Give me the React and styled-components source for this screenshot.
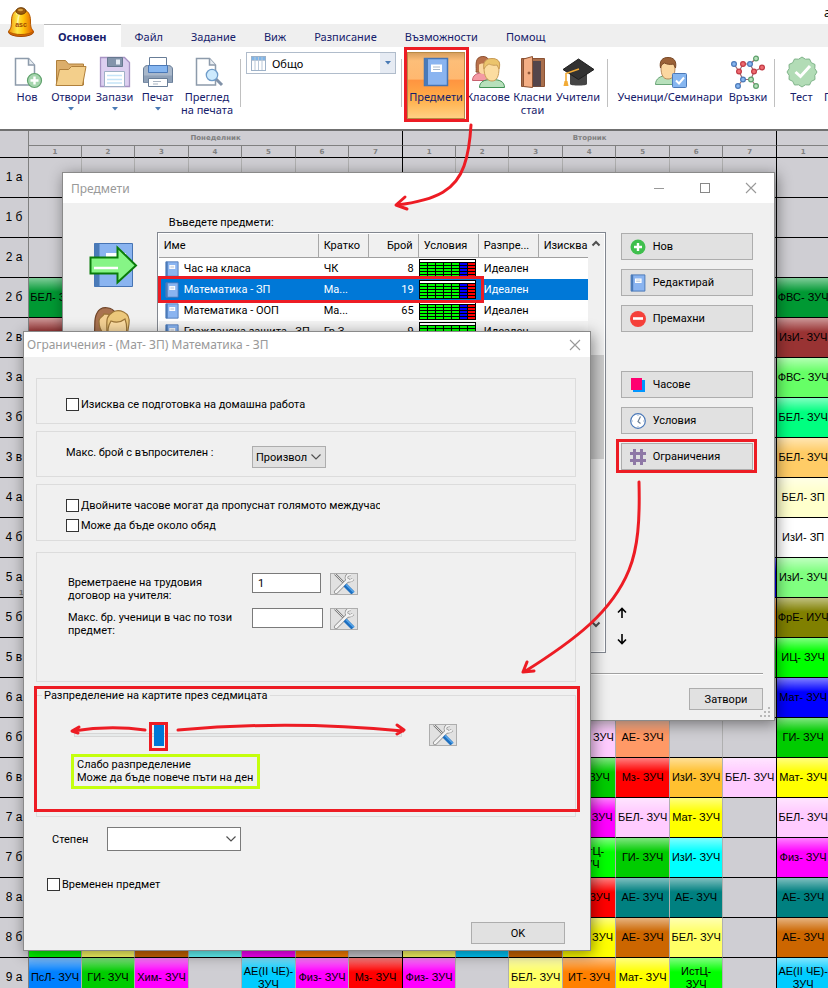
import { useState } from "react";
import styled, { createGlobalStyle } from "styled-components";

const RED = "#ed1c24";

const DAYS = ["Понеделник", "Вторник", "Сряда"];
const PERIODS = [1, 2, 3, 4, 5, 6, 7];
const COL_WIDTHS = [53, 53, 54, 53, 54, 53, 54];

const C = {
    green: "#009933",
    maroon: "#993333",
    light: "#66ff66",
    spring: "#00ff80",
    sand: "#ffcc66",
    cream: "#ffffcc",
    white: "#ffffff",
    mint: "#80ff80",
    olive: "#808000",
    lime: "#00ff00",
    blue: "#0000ff",
    grass: "#00cc00",
    yellow: "#ffff00",
    pink: "#ffccff",
    magenta: "#ff00ff",
    teal: "#008080",
    brown: "#cc6600",
    sky: "#00ccff",
    salmon: "#ff9966",
    red: "#ff0000",
    amber: "#ffc030",
    cyan: "#00ffff",
    lemon: "#ffff66",
    orange: "#ff8000",
    azure: "#0080ff",
};

// lessons: column index (0 = first period of the first day) -> [text, colour]
const ROWS = [
    { name: "1 а", lessons: {} },
    { name: "1 б", lessons: {} },
    { name: "2 а", lessons: {} },
    { name: "2 б", lessons: { 0: ["БЕЛ- ЗУЧ", C.green], 14: ["ФВС- ЗУЧ", C.green] } },
    { name: "2 в", lessons: { 0: ["", C.maroon], 14: ["ИзИ- ЗУЧ", C.maroon] } },
    { name: "3 а", lessons: { 14: ["ФВС- ЗУЧ", C.light] } },
    { name: "3 б", lessons: { 14: ["БЕЛ- ЗУЧ", C.spring] } },
    { name: "3 в", lessons: { 14: ["БЕЛ- ЗУЧ", C.sand] } },
    { name: "4 а", lessons: { 14: ["БЕЛ- ЗП", C.cream] } },
    { name: "4 б", lessons: { 14: ["ИзИ- ЗП", C.white] } },
    { name: "5 а", note: "13", lessons: { 13: ["", C.blue], 14: ["ИзИ- ЗУЧ", C.mint] } },
    { name: "5 б", lessons: { 13: ["", C.orange], 14: ["ФрЕ- ИУЧ", C.olive] } },
    { name: "5 в", lessons: { 13: ["", C.grass], 14: ["ИЦ- ЗУЧ", C.lime] } },
    { name: "6 а", lessons: { 14: ["Мат- ЗУЧ", C.blue] } },
    {
        name: "6 б",
        lessons: { 10: ["БЕЛ- ЗУЧ", C.pink], 11: ["АЕ- ЗУЧ", C.salmon], 14: ["ГИ- ЗУЧ", C.grass] },
    },
    {
        name: "6 в",
        lessons: {
            10: ["ГИ- ЗУЧ", C.grass],
            11: ["Мз- ЗУЧ", C.red],
            12: ["ИзИ- ЗУЧ", C.amber],
            13: ["БЕЛ- ЗУЧ", C.pink],
            14: ["Мат- ЗУЧ", C.yellow],
        },
    },
    {
        name: "7 а",
        lessons: {
            10: ["Физ- ЗУЧ", C.magenta],
            11: ["БЕЛ- ЗУЧ", C.pink],
            12: ["Мат- ЗУЧ", C.yellow],
            14: ["БЕЛ- ЗУЧ", C.pink],
        },
    },
    {
        name: "7 б",
        lessons: {
            10: ["ИстЦ- ЗУЧ", C.lime],
            11: ["ГИ- ЗУЧ", C.grass],
            12: ["ИзИ- ЗУЧ", C.cyan],
            14: ["Физ- ЗУЧ", C.magenta],
        },
    },
    {
        name: "8 а",
        lessons: {
            10: ["Мз- ЗУЧ", C.red],
            11: ["АЕ- ЗУЧ", C.teal],
            12: ["АЕ- ЗУЧ", C.teal],
            14: ["АЕ- ЗУЧ", C.teal],
        },
    },
    {
        name: "8 б",
        lessons: {
            0: ["", C.lime],
            1: ["", C.lemon],
            2: ["", C.brown],
            3: ["", "#66ffff"],
            4: ["", C.magenta],
            5: ["", C.orange],
            7: ["", C.lemon],
            8: ["", C.sky],
            9: ["", C.brown],
            10: ["Мат- ЗУЧ", C.yellow],
            11: ["АЕ- ЗУЧ", C.brown],
            12: ["БЕЛ- ЗУЧ", C.lemon],
            14: ["АЕ- ЗУЧ", C.brown],
        },
    },
    {
        name: "9 а",
        lessons: {
            0: ["ПсЛ- ЗУЧ", C.azure],
            1: ["ГИ- ЗУЧ", C.grass],
            2: ["Хим- ЗУЧ", C.magenta],
            4: ["АЕ(II ЧЕ)- ЗУЧ", C.sky],
            5: ["Физ- ЗУЧ", C.magenta],
            6: ["Мз- ЗУЧ", C.red],
            7: ["Физ- ЗУЧ", C.magenta],
            9: ["БЕЛ- ЗУЧ", C.lemon],
            10: ["ИТ- ЗУЧ", C.orange],
            11: ["Мат- ЗУЧ", C.yellow],
            12: ["ИстЦ- ЗУЧ", C.lime],
            14: ["АЕ(II ЧЕ)- ЗУЧ", C.sky],
        },
    },
];

const TABS = ["Основен", "Файл", "Задание", "Виж", "Разписание", "Възможности", "Помощ"];

const SUBJECTS = [
    { name: "Час на класа", short: "ЧК", count: 8 },
    { name: "Математика - ЗП", short: "Ма...", count: 19 },
    { name: "Математика - ООП", short: "Ма...", count: 65 },
    { name: "Гражданска защита - ЗП", short: "Гр.З", count: 9, plain: true },
];

export default function App() {
    return (
        <Page>
            <GlobalStyle />
            <Ribbon />
            <Timetable />
            <SubjectsWindow />
            <ConstraintsWindow />
            <Marks />
        </Page>
    );
}

function Ribbon() {
    return (
        <header>
            <TitleBar>
                <AppTitle>aSc Разписания</AppTitle>
            </TitleBar>
            <TabBar>
                {TABS.map((tab, i) => (
                    <Tab key={tab} $active={i === 0}>
                        {tab}
                    </Tab>
                ))}
            </TabBar>
            <LogoBox>
                <BellIcon />
            </LogoBox>
            <Toolbar>
                <ToolButton $w={44}>
                    <NewIcon />
                    Нов
                </ToolButton>
                <ToolButton $w={44}>
                    <FolderIcon />
                    Отвори
                    <Caret />
                </ToolButton>
                <ToolButton $w={43}>
                    <FloppyIcon />
                    Запази
                    <Caret />
                </ToolButton>
                <ToolButton $w={43}>
                    <PrinterIcon />
                    Печат
                    <Caret />
                </ToolButton>
                <ToolButton $w={56}>
                    <PreviewIcon />
                    Преглед на печата
                </ToolButton>
                <Separator />
                <ViewBox>
                    <GridIcon />
                    <ViewSelect aria-label="Изглед">
                        <option>Общо</option>
                    </ViewSelect>
                    <ViewArrow>
                        <Caret />
                    </ViewArrow>
                </ViewBox>
                <Separator />
                <ToolButton $w={58} $active>
                    <BookIcon size={30} />
                    Предмети
                </ToolButton>
                <ToolButton $w={46}>
                    <PeopleIcon size={34} />
                    Класове
                </ToolButton>
                <ToolButton $w={43}>
                    <DoorIcon />
                    Класни стаи
                </ToolButton>
                <ToolButton $w={48}>
                    <HatIcon />
                    Учители
                </ToolButton>
                <Separator />
                <ToolButton $w={114}>
                    <StudentIcon />
                    Ученици/Семинари
                </ToolButton>
                <ToolButton $w={42}>
                    <LinksIcon />
                    Връзки
                </ToolButton>
                <Separator />
                <ToolButton $w={43}>
                    <TestIcon />
                    Тест
                </ToolButton>
                <ToolButton $w={54}>
                    <TestIcon />
                    Проверка
                </ToolButton>
            </Toolbar>
        </header>
    );
}

function Timetable() {
    return (
        <TimetableBox>
            <Table>
                <colgroup>
                    <Col $w={29} />
                    {DAYS.map((day) => COL_WIDTHS.map((w, i) => <Col key={day + i} $w={w} />))}
                </colgroup>
                <thead>
                    <tr>
                        <Corner rowSpan={2} />
                        {DAYS.map((day) => (
                            <DayHead key={day} colSpan={7}>
                                {day}
                            </DayHead>
                        ))}
                    </tr>
                    <tr>
                        {DAYS.map((day) =>
                            PERIODS.map((p) => (
                                <PeriodHead key={day + p} $last={p === 7}>
                                    {p}
                                </PeriodHead>
                            ))
                        )}
                    </tr>
                </thead>
                <tbody>
                    {ROWS.map((row) => (
                        <tr key={row.name}>
                            <ClassHead>
                                {row.name}
                                {row.note && <Note>{row.note}</Note>}
                            </ClassHead>
                            {Array.from({ length: 21 }, (_, i) => {
                                const [text, color] = row.lessons[i] || [];
                                return (
                                    <Lesson key={i} $color={color} $last={i % 7 === 6}>
                                        {text}
                                    </Lesson>
                                );
                            })}
                        </tr>
                    ))}
                </tbody>
            </Table>
        </TimetableBox>
    );
}

function SubjectsWindow() {
    return (
        <SubjectsFrame>
            <WindowTitle $tall>
                <span>Предмети</span>
                <WindowButtons>
                    <IconButton aria-label="Минимизирай">
                        <svg width="12" height="12" stroke="#999">
                            <path d="M1 6.5h10" />
                        </svg>
                    </IconButton>
                    <IconButton aria-label="Увеличи">
                        <svg width="12" height="12" fill="none" stroke="#888">
                            <rect x="1.5" y="1.5" width="9" height="9" />
                        </svg>
                    </IconButton>
                    <IconButton aria-label="Затвори прозореца">
                        <CloseIcon />
                    </IconButton>
                </WindowButtons>
            </WindowTitle>
            <SubjectsBody>
                <SideIcons>
                    <BookArrowIcon />
                    <PeopleBigIcon />
                </SideIcons>
                <ListColumn>
                    <ListLabel>Въведете предмети:</ListLabel>
                    <ListBox>
                        <ListScroll>
                            <SubjectTable>
                                <colgroup>
                                    <Col $w={160} />
                                    <Col $w={50} />
                                    <Col $w={50} />
                                    <Col $w={60} />
                                    <Col $w={60} />
                                    <Col $w={49} />
                                </colgroup>
                                <thead>
                                    <tr>
                                        <th>Име</th>
                                        <th>Кратко</th>
                                        <Right as="th">Брой</Right>
                                        <th>Условия</th>
                                        <th>Разпре...</th>
                                        <th>Изисква</th>
                                    </tr>
                                </thead>
                                <tbody>
                                    {SUBJECTS.map((s, i) => (
                                        <SubjectRow key={s.name} $selected={i === 1} $grey={i === 3}>
                                            <td>
                                                <NameCell>
                                                    <BookIcon size={16} />
                                                    {s.name}
                                                </NameCell>
                                            </td>
                                            <td>{s.short}</td>
                                            <Right>{s.count}</Right>
                                            <GridCell>
                                                <ConditionGrid plain={s.plain} />
                                            </GridCell>
                                            <td>Идеален</td>
                                            <td />
                                        </SubjectRow>
                                    ))}
                                </tbody>
                            </SubjectTable>
                            <ScrollBar>
                                <Chevron up />
                                <ScrollThumb />
                                <Chevron />
                            </ScrollBar>
                        </ListScroll>
                    </ListBox>
                </ListColumn>
                <ActionColumn>
                    <ActionButton>
                        <AddIcon />
                        Нов
                    </ActionButton>
                    <ActionButton>
                        <BookIcon size={18} />
                        Редактирай
                    </ActionButton>
                    <ActionButton>
                        <RemoveIcon />
                        Премахни
                    </ActionButton>
                    <ActionGap />
                    <ActionButton>
                        <CardsIcon />
                        Часове
                    </ActionButton>
                    <ActionButton>
                        <ClockIcon />
                        Условия
                    </ActionButton>
                    <ActionButton>
                        <HashIcon />
                        Ограничения
                    </ActionButton>
                    <MoveButtons>
                        <IconButton aria-label="Нагоре">
                            <ArrowIcon />
                        </IconButton>
                        <IconButton aria-label="Надолу">
                            <ArrowIcon down />
                        </IconButton>
                    </MoveButtons>
                </ActionColumn>
            </SubjectsBody>
            <SubjectsFooter>
                <PlainButton $w={74}>Затвори</PlainButton>
            </SubjectsFooter>
            <Grip>
                <svg width="10" height="10" fill="#b8b8b8">
                    <path d="M8 0h2v2H8zM4 4h2v2H4zM8 4h2v2H8zM0 8h2v2H0zM4 8h2v2H4zM8 8h2v2H8z" />
                </svg>
            </Grip>
        </SubjectsFrame>
    );
}

function ConstraintsWindow() {
    const [spread, setSpread] = useState(1);

    return (
        <ConstraintsFrame>
            <WindowTitle>
                <span>Ограничения - (Мат- ЗП) Математика - ЗП</span>
                <IconButton aria-label="Затвори прозореца">
                    <CloseIcon />
                </IconButton>
            </WindowTitle>
            <ConstraintsBody>
                <Group $h={46}>
                    <CheckLabel>
                        <CheckBox />
                        Изисква се подготовка на домашна работа
                    </CheckLabel>
                </Group>
                <Group $h={46}>
                    <FormRow>
                        <FieldLabel htmlFor="questions">Макс. брой с въпросителен :</FieldLabel>
                        <SelectBox $w={74} $h={22} $grey>
                            <select id="questions">
                                <option>Произволно</option>
                            </select>
                            <Chevron thin />
                        </SelectBox>
                    </FormRow>
                </Group>
                <Group $h={57}>
                    <CheckLabel>
                        <CheckBox />
                        <Clipped>Двойните часове могат да пропуснат голямото междучасие</Clipped>
                    </CheckLabel>
                    <CheckLabel>
                        <CheckBox />
                        Може да бъде около обяд
                    </CheckLabel>
                </Group>
                <Group $h={130} $top>
                    <FormRow $gap={9}>
                        <FieldLabel htmlFor="contract">Времетраене на трудовия договор на учителя:</FieldLabel>
                        <TextBox id="contract" defaultValue="1" $w={69} />
                        <ToolsButton aria-label="Настройки">
                            <ToolsIcon />
                        </ToolsButton>
                    </FormRow>
                    <FormRow $gap={7}>
                        <FieldLabel htmlFor="pupils">Макс. бр. ученици в час по този предмет:</FieldLabel>
                        <TextBox id="pupils" $w={71} />
                        <ToolsButton aria-label="Настройки">
                            <ToolsIcon />
                        </ToolsButton>
                    </FormRow>
                </Group>
                <SpreadGroup>
                    <legend>Разпределение на картите през седмицата</legend>
                    <SliderRow>
                        <Slider
                            aria-label="Разпределение на картите"
                            min="0"
                            max="4"
                            value={spread}
                            onChange={(e) => setSpread(Number(e.target.value))}
                        />
                        <ToolsButton aria-label="Настройки">
                            <ToolsIcon />
                        </ToolsButton>
                    </SliderRow>
                    <SpreadText>
                        Слабо разпределение
                        <br />
                        Може да бъде повече пъти на ден
                    </SpreadText>
                </SpreadGroup>
                <DegreeRow>
                    <label htmlFor="degree">Степен</label>
                    <SelectBox $w={134} $h={24}>
                        <select id="degree">
                            <option></option>
                        </select>
                        <Chevron thin />
                    </SelectBox>
                </DegreeRow>
                <TempRow>
                    <CheckLabel>
                        <CheckBox />
                        Временен предмет
                    </CheckLabel>
                </TempRow>
                <OkRow>
                    <PlainButton $w={94}>OK</PlainButton>
                </OkRow>
            </ConstraintsBody>
        </ConstraintsFrame>
    );
}

// hand-drawn red frames and arrows over the windows
function Marks() {
    return (
        <MarksSvg fill="none" stroke={RED} strokeWidth="3" strokeLinecap="round" strokeLinejoin="round">
            <g strokeLinejoin="miter">
                <rect x="405.5" y="48.5" width="62" height="72" />
                <rect x="159.5" y="277.5" width="323" height="24" />
                <rect x="617.5" y="440.5" width="138" height="31" />
                <rect x="35.5" y="687.5" width="543" height="123" />
                <rect x="150.5" y="723.5" width="16" height="26" />
                <rect x="72.5" y="755.5" width="186" height="32" stroke="#c4ff0e" />
            </g>
            <path d="M471 125C470 142 468 155 464 166C456 189 438 200 397 205M405 197L396 205L407 209" />
            <path d="M639 482C640 520 638 548 629 570C612 612 575 640 524 672M527 662L523 672L534 671" />
            <path d="M145 730Q110 725 73 731M79 727L72 731L78 733" />
            <path d="M178 730Q290 720 403 731M397 725L404 730L397 734" />
        </MarksSvg>
    );
}

function Caret() {
    return (
        <svg width="6" height="4" fill="#4a7ab5">
            <path d="M0 0h6L3 3.5z" />
        </svg>
    );
}

function Chevron({ up, thin }) {
    return (
        <svg width="12" height="8" fill="none" stroke="#505050" strokeWidth={thin ? 1.2 : 2}>
            <path d={up ? "M2.5 6.5L6 3l3.5 3.5" : thin ? "M1.5 1.5L6 6l4.500-4.500" : "M2.500 1.500L6 5l3.500-3.500"} />
        </svg>
    );
}

function CloseIcon() {
    return (
        <svg width="12" height="12" stroke="#999" strokeWidth="1.1">
            <path d="M1 1l10 10M11 1L1 11" />
        </svg>
    );
}

function ArrowIcon({ down }) {
    return (
        <svg width="12" height="14" viewBox="0 0 12 14" fill="none" stroke="#000" strokeWidth="1.6">
            <path d={down ? "M6 2v9M2 7.500L6 11.500l4-4" : "M6 12V3M2 6.500L6 2.500l4 4"} />
        </svg>
    );
}

function ConditionGrid({ plain }) {
    const cols = [0, 1, 2, 3, 4, 5, 6];
    const rows = [0, 1, 2, 3, 4];
    const color = (c) => (plain || c < 5 ? "#00ff00" : c === 5 ? "#0000ff" : "#ff0000");
    return (
        <svg width="57" height="19" shapeRendering="crispEdges">
            <rect width="57" height="19" />
            <rect x="1" y="1" width="55" height="2" fill="#fff" />
            {rows.map((r) =>
                cols.map((c) => (
                    <rect key={r + "-" + c} x={1 + c * 8} y={4 + r * 3} width="7" height="2" fill={color(c)} />
                ))
            )}
        </svg>
    );
}

function BellIcon() {
    return (
        <svg width="28" height="32" viewBox="0 0 28 32">
            <defs>
                <linearGradient id="bell" x1="0" x2="1">
                    <stop offset="0" stopColor="#f08a00" />
                    <stop offset=".35" stopColor="#ffe94a" />
                    <stop offset=".6" stopColor="#ffc20a" />
                    <stop offset="1" stopColor="#e05a00" />
                </linearGradient>
            </defs>
            <ellipse cx="14" cy="25" rx="12.500" ry="4.500" fill="#d96a00" stroke="#a34800" />
            <path d="M14 2.500C6.500 2.500 4.500 8 4.500 14s-.500 7-3 10.500c5 4 20 4 25 0c-2.500-3.500-3-4.500-3-10.500S21.500 2.500 14 2.500z" fill="url(#bell)" stroke="#b55a00" />
            <path d="M9.500 7.500c1-2 3-2.500 4-2.500c-2 3-3 9-3 15" stroke="#fff3a0" strokeWidth="1.500" fill="none" />
            <ellipse cx="14" cy="4" rx="5" ry="3.300" fill="#9a5a10" stroke="#6d3a00" />
            <ellipse cx="13.500" cy="3" rx="2.500" ry="1.200" fill="#d8a040" />
            <text x="14" y="20" textAnchor="middle" fontSize="7" fontWeight="700" fontFamily="Liberation Sans, sans-serif" fill="#a34a00">
                asc
            </text>
        </svg>
    );
}

function NewIcon() {
    return (
        <svg width="32" height="34" viewBox="0 0 32 34">
            <path d="M4.500 3.500h13l6 6.500v20h-19z" fill="#fff" stroke="#8d9bab" strokeWidth="1.500" />
            <path d="M17.500 3.500v6.500h6" fill="#e8edf2" stroke="#8d9bab" strokeWidth="1.500" />
            <circle cx="23.500" cy="25.500" r="7" fill="#a6d6ae" stroke="#5ea06b" strokeWidth="1.200" />
            <path d="M23.500 21.500v8M19.500 25.500h8" stroke="#fff" strokeWidth="2.400" />
        </svg>
    );
}

function FolderIcon() {
    return (
        <svg width="34" height="34" viewBox="0 0 34 34" stroke="#b0803c">
            <path d="M2.500 30V5.500h9l3 3.500h15v21z" fill="#dcae6b" />
            <path d="M2 30.500l3.500-16h9l3-3H32l-3.500 19z" fill="#f3cf8b" />
        </svg>
    );
}

function FloppyIcon() {
    return (
        <svg width="34" height="34" viewBox="0 0 34 34">
            <path d="M2.500 2.500h24l5 5v24h-29z" fill="#dccff0" stroke="#a793c4" strokeWidth="1.300" />
            <path d="M9.500 2.500h15v9h-15z" fill="#8394ab" stroke="#66788f" />
            <path d="M18 4.500h4v5h-4z" fill="#e6ecf5" />
            <path d="M6.500 16.500h20v15h-20z" fill="#fff" stroke="#9fb0c6" />
            <path d="M9 20.500h15M9 24.500h15M9 28h15" stroke="#c5e4f8" strokeWidth="1.500" />
        </svg>
    );
}

function PrinterIcon() {
    return (
        <svg width="32" height="34" viewBox="0 0 32 34" stroke="#687d97">
            <path d="M1.500 14c0-2 2-3.500 4-3.500h21c2 0 4 1.500 4 3.500v13.500h-29z" fill="#a9b8cb" />
            <path d="M7.500 2.500h17v8h-17z" fill="#fff" />
            <path d="M6.500 10.500h19v7h-19z" fill="#86b6f0" stroke="#4b79b8" />
            <path d="M2 20.500h28v7H2z" fill="#8fa1b8" stroke="none" />
            <path d="M6.500 23.500h19v8h-19z" fill="#fff" />
            <path d="M11 26.500h8M11 29h5" stroke="#a9b5c3" />
        </svg>
    );
}

function PreviewIcon() {
    return (
        <svg width="34" height="34" viewBox="0 0 34 34">
            <path d="M6.500 3.500h13l6 6.500v20h-19z" fill="#fff" stroke="#8d9bab" strokeWidth="1.500" />
            <path d="M19.500 3.500v6.500h6" fill="#e8edf2" stroke="#8d9bab" strokeWidth="1.500" />
            <path d="M26 24l6 6" stroke="#8192a8" strokeWidth="3" />
            <circle cx="22" cy="20" r="5.700" fill="#cdeafd" stroke="#6f9cc9" strokeWidth="1.300" />
        </svg>
    );
}

function GridIcon() {
    return (
        <svg width="15" height="15" viewBox="0 0 15 15">
            <rect x=".5" y=".5" width="14" height="14" fill="#fff" stroke="#9eb2c8" />
            <path d="M1 1h13v3H1z" fill="#7fb5e8" />
            <path d="M4 1v13M7.500 1v13M11 1v13M1 4.500h13" stroke="#b9c8d8" />
        </svg>
    );
}

function BookIcon({ size }) {
    return (
        <svg width={size} height={size} viewBox="0 0 30 30">
            <path d="M3.500 1.500h23v27h-23z" fill="#8ab4f0" stroke="#4674b4" strokeWidth="1.500" />
            <path d="M3.500 1.500h3.500v27H3.500z" fill="#4a7ab8" />
            <path d="M10 7.500h11v7.500H10z" fill="#fff" />
            <path d="M12 10h7M12 12.500h7" stroke="#a8b8cc" />
        </svg>
    );
}

function PeopleIcon({ size }) {
    return (
        <svg width={size} height={size} viewBox="0 0 34 34">
            <path d="M5 17C6 14 3 4 9 2C15 0 19 4 19 9l-3 9z" fill="#b9704a" stroke="#8d5030" />
            <path d="M1.500 25.500c0-5 4-7.500 9-7.500s8 2 8 7.500z" fill="#f49aa4" stroke="#c7606e" />
            <path d="M8 10c0-2 8-2 8 0v6c0 4-8 4-8 0z" fill="#fbd7a0" />
            <path d="M8.500 32.500c0-6 5-8 12.500-8s12.500 2 12.500 8z" fill="#b7e0bb" stroke="#3f9154" />
            <path d="M13 13c-1-6 3-9 8-9s9 2 7 9c0 8-2 13-7 13s-8-5-8-13z" fill="#fbdca0" stroke="#c99c58" />
            <path d="M13 14C11.500 6 16 3.500 21 3.500S30.500 6 28 14l-2-4c-4 1-8-1-8-1s-4 2-5 5z" fill="#ebc46c" stroke="#c99c58" />
        </svg>
    );
}

function PeopleBigIcon() {
    return (
        <svg width="48" height="48" viewBox="0 0 48 48" strokeWidth="1.200">
            <path d="M5 30C7 20 4 14 8 7C12 -1 24 1 26 7v23z" fill="#a97350" stroke="#6f4428" />
            <path d="M10 15c0-4 4-4 5-7l11 1v18c-8 6-16 0-16-12z" fill="#f3d093" stroke="#9b7438" />
            <path d="M18 30C18 14 16 11 24 6C29 3 42 5 40 18l-2 12z" fill="#ecc87b" stroke="#9b7438" />
            <path d="M20 34c-2-10-1-14 2-19c5 2 9 2 14-2c3 8 2 14 0 21z" fill="#fbdca4" stroke="#9b7438" />
        </svg>
    );
}

function DoorIcon() {
    return (
        <svg width="30" height="34" viewBox="0 0 30 34" stroke="#8c5233">
            <path d="M3.500 3.500h23v28h-23z" fill="#a86e4c" />
            <path d="M7 6h16v25.500H7z" fill="#54454b" stroke="none" />
            <path d="M5.500 31.500V4l9-2.500v31z" fill="#f4ae84" />
            <circle cx="11" cy="18" r="1" fill="#8c5233" />
        </svg>
    );
}

function HatIcon() {
    return (
        <svg width="34" height="34" viewBox="0 0 34 34">
            <path d="M9 15v14c0 2 17 2 17 0V15z" fill="#454545" />
            <path d="M17.500 4L33 14.500l-15.500 10L2 14.500z" fill="#323232" stroke="#1e1e1e" />
            <path d="M18 14L5 18.500v9" fill="none" stroke="#f2ab36" strokeWidth="1.600" />
            <path d="M3.500 26h3l1 5h-5z" fill="#f2ab36" />
        </svg>
    );
}

function StudentIcon() {
    return (
        <svg width="34" height="34" viewBox="0 0 34 34">
            <path d="M2.500 29.500c0-6 5-9 12-9s11 2 11 9z" fill="#b7e0bb" stroke="#6aa578" />
            <path d="M8 12c0-6 3-8 7-8s7 2 7 8c0 8-2 12-7 12s-7-4-7-12z" fill="#fbd7a0" stroke="#b9895a" />
            <path d="M7.500 13C6 5 10 2.500 15 2.500S24 5 22.500 13l-2-4c-4 1-7 0-9-1c-2 1-4 2-4 5z" fill="#9b6238" stroke="#7a4926" />
            <rect x="19.500" y="18.500" width="14" height="14" rx="1" fill="#86b6f0" stroke="#4b79b8" />
            <path d="M23 25.500l3 3l5-6" fill="none" stroke="#fff" strokeWidth="2" />
        </svg>
    );
}

function LinksIcon() {
    return (
        <svg width="34" height="34" viewBox="0 0 34 34" strokeWidth="1.200">
            <path d="M3 9l5 7.500M8 16.500l4 8M12 9h7M19 9l4 7.500M23 16.500l-3 8M12 24.500h8M23 16.500l8-4M19 9l6-5.500M12 24.500l-5 6.500M20 24.500l5 6.500M12 9l-4 7.500" stroke="#9a6870" />
            <g fill="#86b6f0" stroke="#4b79b8">
                <circle cx="3" cy="9" r="2.400" />
                <circle cx="19" cy="9" r="2.400" />
                <circle cx="12" cy="24.500" r="2.400" />
                <circle cx="7" cy="31" r="2.400" />
            </g>
            <g fill="#ee6a70" stroke="#c23c46">
                <circle cx="12" cy="9" r="2.400" />
                <circle cx="8" cy="16.500" r="2.400" />
                <circle cx="23" cy="16.500" r="2.400" />
                <circle cx="31" cy="12.500" r="2.400" />
            </g>
            <g fill="#b7e0bb" stroke="#5ea06b">
                <circle cx="25" cy="3.500" r="2.400" />
                <circle cx="20" cy="24.500" r="2.400" />
                <circle cx="25" cy="31" r="2.400" />
            </g>
        </svg>
    );
}

function TestIcon() {
    // badge with twelve blunt teeth
    const points = Array.from({ length: 24 }, (_, i) => {
        const r = i % 2 ? 13.2 : 15;
        const a = (i * Math.PI) / 12;
        return `${(16 + r * Math.cos(a)).toFixed(1)},${(17 + r * Math.sin(a)).toFixed(1)}`;
    });
    return (
        <svg width="32" height="34" viewBox="0 0 32 34">
            <polygon points={points.join(" ")} fill="#b2dcb6" stroke="#7fb489" strokeLinejoin="round" />
            <path d="M9.500 17l5 4.500L24 11" fill="none" stroke="#fff" strokeWidth="3" />
        </svg>
    );
}

function BookArrowIcon() {
    return (
        <svg width="50" height="46" viewBox="0 0 50 46">
            <path d="M5.500 1.500h38v43h-38z" fill="#8ab4f0" stroke="#4674b4" />
            <path d="M5.500 1.500h5v43h-5z" fill="#4a7ab8" />
            <path d="M17 11h20v6H17z" fill="#fff" />
            <path d="M1.500 15.500h27v-10L47 23.500l-18.500 17v-9h-27z" fill="#86f586" stroke="#0a7c0a" strokeWidth="2" />
            <path d="M5 26h24" stroke="#fff" strokeWidth="2.500" />
        </svg>
    );
}

function AddIcon() {
    return (
        <svg width="18" height="18" viewBox="0 0 18 18">
            <circle cx="9" cy="9" r="7.500" fill="#3fbf4d" />
            <path d="M9 5v8M5 9h8" stroke="#fff" strokeWidth="2.400" />
        </svg>
    );
}

function RemoveIcon() {
    return (
        <svg width="18" height="18" viewBox="0 0 18 18">
            <circle cx="9" cy="9" r="8" fill="#f5403a" />
            <path d="M4 8.500h10" stroke="#fff" strokeWidth="2.600" />
        </svg>
    );
}

function CardsIcon() {
    return (
        <svg width="18" height="18" viewBox="0 0 18 18">
            <path d="M4 4h12v12H4z" fill="#0096ff" />
            <path d="M2 2h11v12H2z" fill="#ff0070" />
        </svg>
    );
}

function ClockIcon() {
    return (
        <svg width="18" height="18" viewBox="0 0 18 18" fill="none">
            <circle cx="9" cy="9" r="7.300" fill="#fff" stroke="#4a78b8" strokeWidth="1.200" />
            <path d="M11.500 4.500L9 9.500l2.500 2" stroke="#6d7f94" strokeWidth="1.200" />
            <path d="M9 2.500v1.500M9 14v1.500M2.500 9h1.500M14 9h1.500" stroke="#9db1c9" />
        </svg>
    );
}

function HashIcon() {
    return (
        <svg width="18" height="18" viewBox="0 0 18 18" stroke="#8e78a6" strokeWidth="3">
            <path d="M5.500 1v16M12.500 1v16M1 5.500h16M1 12.500h16" />
        </svg>
    );
}

function ToolsIcon() {
    return (
        <svg width="26" height="20" viewBox="0 0 26 20" fill="none">
            <path d="M4 0l11 11" stroke="#777" strokeWidth="2.200" />
            <path d="M4 0l11 11" stroke="#ddd" />
            <path d="M5 18L17 6" stroke="#8a8a8a" strokeWidth="4" strokeLinecap="round" />
            <path d="M20 .500c-3-.500-5 1.500-4.500 4c.5 2.500 4 3.500 6.500 .500" stroke="#8a8a8a" strokeWidth="3.400" />
            <path d="M20 .500c-3-.500-5 1.500-4.500 4c.5 2.500 4 3.500 6.500 .500" stroke="#f2f2f2" strokeWidth="2" />
            <path d="M5 18L17 6" stroke="#f2f2f2" strokeWidth="2.600" strokeLinecap="round" />
            <path d="M14 11l8 8" stroke="#1d6fc0" strokeWidth="4.200" />
            <path d="M15 10.500l8 8" stroke="#58a6ea" strokeWidth="1.400" />
        </svg>
    );
}

const GlobalStyle = createGlobalStyle`
    * {
        box-sizing: border-box;
    }
    body {
        margin: 0;
        background: #cfced3;
        font-family: "Noto Sans", sans-serif;
        font-size: 11px;
        line-height: 13px;
        color: #000;
    }
    button, input, select {
        font: inherit;
        color: inherit;
    }
    svg {
        display: block;
        flex: none;
    }
`;

const Page = styled.div`
    position: relative;
    width: 100%;
    height: 100vh;
    overflow: hidden;
`;

const TitleBar = styled.div`
    display: flex;
    justify-content: flex-end;
    height: 24px;
    background: #fff;
    overflow: hidden;
`;
const AppTitle = styled.span`
    flex: none;
    width: 4px;
    padding-top: 6px;
    overflow: hidden;
    white-space: nowrap;
    font-size: 12px;
`;
const TabBar = styled.nav`
    display: flex;
    height: 23px;
    padding-left: 44px;
    background: #efefef;
    overflow: hidden;
`;
const Tab = styled.button`
    flex: none;
    padding: 1px 14px 0;
    border: 0;
    border-top: 1px solid ${({ $active }) => ($active ? "#b8b8b8" : "transparent")};
    background: ${({ $active }) => ($active ? "#fff" : "none")};
    font-weight: ${({ $active }) => ($active ? 700 : 400)};
    color: #15206b;
`;
const LogoBox = styled.div`
    position: absolute;
    left: 7px;
    top: 7px;
`;
const Toolbar = styled.div`
    display: flex;
    height: 82px;
    padding: 5px 0 0 5px;
    background: #fff;
    overflow: hidden;
`;
const ToolButton = styled.button`
    display: flex;
    flex: none;
    flex-direction: column;
    align-items: center;
    width: ${({ $w }) => $w}px;
    height: 67px;
    padding: 2px 0 0;
    border: 1px solid ${({ $active }) => ($active ? "#b98a45" : "transparent")};
    background: ${({ $active }) =>
        $active ? "linear-gradient(#d8a060, #fdbe78 12%, #ffb870 40%, #ff9440 42%, #ffae48 70%, #ffd084)" : "none"};
    color: #15206b;
    & > svg:first-child {
        height: 34px;
        margin-bottom: 1px;
    }
    & > svg + svg {
        margin-top: 4px;
    }
`;
const Separator = styled.div`
    flex: none;
    width: 1px;
    height: 48px;
    margin: 7px 5px 0;
    background: #c0c0c0;
`;
const ViewBox = styled.div`
    display: flex;
    flex: none;
    align-items: center;
    width: 150px;
    height: 22px;
    padding-left: 4px;
    border: 1px solid #b0bccb;
`;
const ViewSelect = styled.select`
    flex: 1;
    min-width: 0;
    padding: 0 0 0 6px;
    border: 0;
    background: none;
    appearance: none;
`;
const ViewArrow = styled.span`
    display: grid;
    place-items: center;
    width: 15px;
    height: 20px;
    background: #e6ebf3;
`;

const TimetableBox = styled.main`
    overflow: hidden;
    border-top: 2px solid #707070;
`;
const Table = styled.table`
    table-layout: fixed;
    width: 1px;
    border-spacing: 0;
    & th, & td {
        padding: 0;
        overflow: hidden;
        font-family: "Liberation Sans", sans-serif;
        font-weight: 400;
        line-height: 13px;
    }
`;
const Col = styled.col`
    width: ${({ $w }) => $w}px;
`;
const Corner = styled.th`
    border-right: 1px solid #808080;
    border-bottom: 1px solid #000;
`;
const DayHead = styled.th`
    height: 15px;
    border-right: 1px solid #000;
    border-bottom: 1px solid #808080;
    && {
        font-family: "DejaVu Sans", sans-serif;
        font-size: 7px;
        font-weight: 700;
        line-height: 8px;
        color: #808080;
    }
`;
const PeriodHead = styled(DayHead)`
    height: 12px;
    border-right: 1px solid ${({ $last }) => ($last ? "#000" : "#808080")};
    border-bottom: 1px solid #000;
`;
const ClassHead = styled.th`
    position: relative;
    height: 40px;
    border-right: 1px solid #808080;
    border-bottom: 1px solid #000;
    font-size: 12px;
`;
const Note = styled.span`
    position: absolute;
    right: 0;
    bottom: 0;
    font-size: 8px;
    font-weight: 700;
    line-height: 8px;
    color: #808080;
`;
const Lesson = styled.td`
    height: 40px;
    border-right: 1px solid ${({ $last }) => ($last ? "#000" : "#b0b0b0")};
    border-bottom: 1px solid #000;
    background: ${({ $color }) =>
        $color ? `linear-gradient(rgba(255, 255, 255, 0.5), rgba(255, 255, 255, 0) 14px), ${$color}` : "none"};
    font-size: 11px;
    text-align: center;
`;

const WindowFrame = styled.section`
    position: absolute;
    border: 1px solid #8a8a8a;
    background: #f0f0f0;
    box-shadow: 2px 3px 14px rgba(0, 0, 0, 0.45);
    font-family: Roboto, "Noto Sans", sans-serif;
`;
const SubjectsFrame = styled(WindowFrame)`
    left: 62px;
    top: 172px;
    width: 713px;
`;
const ConstraintsFrame = styled(WindowFrame)`
    left: 23px;
    top: 331px;
    width: 568px;
`;
const WindowTitle = styled.div`
    display: flex;
    align-items: center;
    justify-content: space-between;
    height: ${({ $tall }) => ($tall ? 30 : 25)}px;
    padding: ${({ $tall }) => ($tall ? "0 17px 0 8px" : "0 9px 0 3px")};
    background: #fff;
    font-family: "Noto Sans", sans-serif;
    font-size: 12px;
    color: #999;
`;
const WindowButtons = styled.div`
    display: flex;
    gap: 34px;
`;
const IconButton = styled.button`
    padding: 0;
    border: 0;
    background: none;
`;

const SubjectsBody = styled.div`
    display: flex;
`;
const SideIcons = styled.div`
    display: flex;
    flex-direction: column;
    gap: 18px;
    width: 94px;
    padding: 39px 0 0 26px;
`;
const ListColumn = styled.div`
    flex: 1;
    padding-top: 13px;
`;
const ListLabel = styled.div`
    height: 16px;
    padding-left: 12px;
`;
const ListBox = styled.div`
    height: 421px;
    padding: 1px;
    border: 1px solid #828790;
    background: #fff;
`;
const ListScroll = styled.div`
    display: flex;
    height: 100%;
    align-items: flex-start;
`;
const SubjectTable = styled.table`
    flex: 1;
    table-layout: fixed;
    width: 429px;
    border-spacing: 0;
    & th, & td {
        height: 21px;
        padding: 0 5px;
        overflow: hidden;
        text-align: left;
        font-weight: 400;
        white-space: nowrap;
    }
    & th {
        height: 24px;
        border-right: 1px solid #a8a8a8;
        border-bottom: 1px solid #a0a0a0;
        background: #f0f0f0;
    }
    & th:last-child {
        border-right: 0;
    }
`;
const SubjectRow = styled.tr`
    background: ${({ $selected, $grey }) => ($selected ? "#0078d7" : $grey ? "#f4f4f4" : "#fff")};
    color: ${({ $selected }) => ($selected ? "#fff" : "#000")};
`;
const Right = styled.td`
    && {
        text-align: right;
    }
`;
const NameCell = styled.div`
    display: flex;
    align-items: center;
    gap: 4px;
`;
const GridCell = styled.td`
    && {
        padding: 0;
    }
`;
const ScrollBar = styled.div`
    display: flex;
    flex-direction: column;
    align-items: center;
    width: 16px;
    height: 100%;
    padding: 5px 0 22px;
    background: #f0f0f0;
    & > svg:last-child {
        margin-top: auto;
    }
`;
const ScrollThumb = styled.div`
    width: 100%;
    height: 104px;
    margin-top: 108px;
    background: #cdcdcd;
`;
const ActionColumn = styled.div`
    display: flex;
    flex-direction: column;
    gap: 9px;
    width: 169px;
    padding: 30px 21px 7px 10px;
`;
const ActionButton = styled.button`
    display: flex;
    align-items: center;
    gap: 6px;
    height: 27px;
    margin-left: 5px;
    padding: 0 7px;
    border: 1px solid #adadad;
    background: #e1e1e1;
`;
const ActionGap = styled.div`
    height: 21px;
`;
const MoveButtons = styled.div`
    display: flex;
    flex-direction: column;
    gap: 12px;
    width: 12px;
    margin-top: auto;
`;
const SubjectsFooter = styled.div`
    display: flex;
    justify-content: flex-end;
    margin: 20px 11px 0;
    padding: 14px 0 10px;
    border-top: 1px solid #a0a0a0;
    box-shadow: inset 0 1px #fff;
`;
const PlainButton = styled.button`
    width: ${({ $w }) => $w}px;
    height: 22px;
    padding: 0;
    border: 1px solid #adadad;
    background: #e1e1e1;
`;
const Grip = styled.div`
    position: absolute;
    right: 4px;
    bottom: 3px;
`;

const ConstraintsBody = styled.div`
    display: flex;
    flex-direction: column;
    gap: 7px;
    padding: 21px 14px 6px 12px;
`;
const Group = styled.div`
    display: flex;
    flex-direction: column;
    justify-content: ${({ $top }) => ($top ? "flex-start" : "center")};
    gap: ${({ $top }) => ($top ? 6 : 7)}px;
    min-height: ${({ $h }) => $h}px;
    margin-top: ${({ $top }) => ($top ? 4 : 0)}px;
    padding: ${({ $top }) => ($top ? "20px 0 0 31px" : "6px 0 0 29px")};
    border: 1px solid #dcdcdc;
`;
const CheckLabel = styled.label`
    display: flex;
    align-items: center;
    gap: 2px;
`;
const CheckBox = styled.input.attrs({ type: "checkbox" })`
    appearance: none;
    flex: none;
    width: 13px;
    height: 13px;
    margin: 0;
    border: 1px solid #333;
    background: #fff;
    &:checked {
        background: #333;
    }
`;
const Clipped = styled.span`
    width: 299px;
    overflow: hidden;
    white-space: nowrap;
`;
const FormRow = styled.div`
    display: flex;
    align-items: flex-start;
    gap: ${({ $gap }) => $gap || 0}px;
`;
const FieldLabel = styled.label`
    flex: none;
    width: ${({ htmlFor }) => (htmlFor === "questions" ? 186 : htmlFor === "contract" ? 175 : 177)}px;
    padding: ${({ htmlFor }) => (htmlFor === "questions" ? "0" : "3px 8px 0 0")};
`;
const SelectBox = styled.div`
    display: flex;
    align-items: center;
    width: ${({ $w }) => $w}px;
    height: ${({ $h }) => $h}px;
    padding: 0 3px;
    border: 1px solid ${({ $grey }) => ($grey ? "#adadad" : "#7a7a7a")};
    background: ${({ $grey }) => ($grey ? "#e1e1e1" : "#fff")};
    & select {
        flex: 1;
        min-width: 0;
        margin-right: 3px;
        padding: 0;
        border: 0;
        background: none;
        appearance: none;
        text-overflow: clip;
    }
`;
const TextBox = styled.input.attrs({ type: "text" })`
    width: ${({ $w }) => $w}px;
    height: 20px;
    padding: 0 5px;
    border: 1px solid #7a7a7a;
    background: #fff;
`;
const ToolsButton = styled.button`
    display: grid;
    place-items: center;
    width: 28px;
    height: 22px;
    padding: 0;
    border: 1px solid #adadad;
    background: #e1e1e1;
`;
const SpreadGroup = styled.fieldset`
    height: 128px;
    margin: 0;
    padding: 22px 0 0 37px;
    border: 1px solid #dcdcdc;
    & legend {
        margin-left: -32px;
        padding: 0 2px;
    }
`;
const SliderRow = styled.div`
    display: flex;
    align-items: center;
    gap: 27px;
`;
const Slider = styled.input.attrs({ type: "range" })`
    appearance: none;
    width: 328px;
    height: 22px;
    margin: 0;
    background: none;
    &::-webkit-slider-runnable-track {
        height: 4px;
        border: 1px solid #d6d6d6;
        background: #e7eaea;
    }
    &::-webkit-slider-thumb {
        appearance: none;
        width: 10px;
        height: 21px;
        margin-top: -9px;
        background: #0078d7;
    }
`;
const SpreadText = styled.p`
    margin: 12px 0 0 3px;
`;
const DegreeRow = styled.div`
    display: flex;
    align-items: center;
    margin-top: 3px;
    padding-left: 16px;
    & label {
        width: 55px;
    }
`;
const TempRow = styled.div`
    margin-top: 20px;
    padding-left: 11px;
`;
const OkRow = styled.div`
    display: flex;
    justify-content: flex-end;
    margin-top: 24px;
    padding-right: 11px;
`;

const MarksSvg = styled.svg`
    position: absolute;
    left: 0;
    top: 0;
    width: 100%;
    height: 100%;
    pointer-events: none;
`;
